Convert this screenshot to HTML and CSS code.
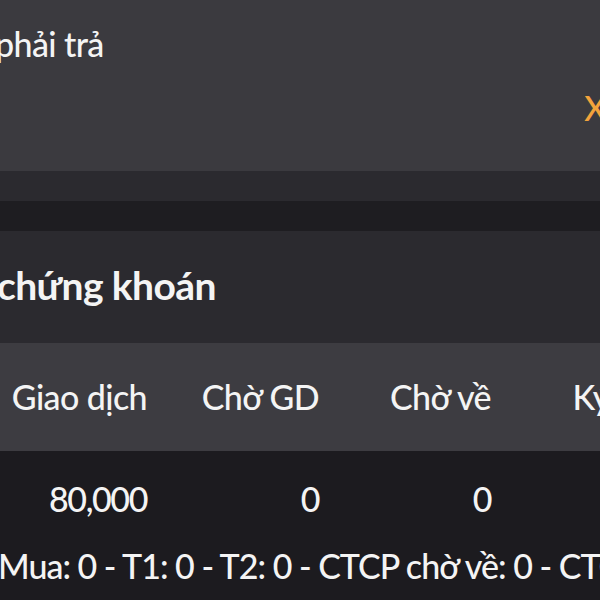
FILE: index.html
```html
<!DOCTYPE html>
<html lang="vi">

<head>
    <meta charset="UTF-8">
    <meta name="viewport" content="width=device-width, initial-scale=1.0">
    <title>Tài sản</title>
    <link rel="stylesheet" href="styles.css">
</head>

<body>
    <main class="page">

        <!-- summary card -->
        <section class="summary">
            <div class="summary-label">phải trả</div>
            <div class="summary-action">
                <a class="link">X</a>
            </div>
        </section>

        <div class="band"></div>
        <div class="band dark"></div>

        <!-- portfolio -->
        <section class="portfolio">
            <h2 class="title">chứng khoán</h2>
        </section>

        <div class="grid head">
            <div class="cell">Giao dịch</div>
            <div class="cell">Chờ GD</div>
            <div class="cell">Chờ về</div>
            <div class="cell">Ký gửi</div>
        </div>

        <div class="rows">
            <div class="grid values">
                <div class="cell">80,000</div>
                <div class="cell">0</div>
                <div class="cell">0</div>
                <div class="cell">0</div>
            </div>
            <p class="note">Mua: 0 - T1: 0 - T2: 0 - CTCP chờ về: 0 - CTCP chờ GD: 0</p>
        </div>

    </main>
</body>

</html>
```

FILE: styles.css
```css
* {
    margin: 0;
    padding: 0;
    box-sizing: border-box;
}

html,
body {
    height: 100%;
    overflow: hidden;
}

body {
    background-color: #1c1b1f;
    color: #f4f4f4;
    font-family: Lato, "Noto Sans", sans-serif;
    font-size: 34px;
    font-weight: 500;
    line-height: 40px;
    letter-spacing: -0.6px;
}

.page {
    display: flex;
    flex-direction: column;
    width: 600px;
}

/* summary card */

.summary {
    display: flex;
    flex-direction: column;
    height: 171px;
    padding-top: 24px;
    background-color: #3b3a3f;
}

.summary-label {
    margin-left: -5px;
    white-space: nowrap;
}

.summary-action {
    display: flex;
    justify-content: flex-end;
    margin-top: 24px;
    margin-right: -6px;
}

.summary-action .link {
    color: #f3a33c;
    cursor: pointer;
}

.band {
    height: 30px;
    background-color: #2b2a2f;
}

.band.dark {
    background-color: #1e1d21;
}

/* portfolio */

.portfolio {
    height: 112px;
    padding-top: 34px;
    background-color: #2b2a2f;
}

.portfolio .title {
    margin-left: -3px;
    font-size: 39px;
    font-weight: 700;
    white-space: nowrap;
}

.grid {
    display: grid;
    grid-template-columns: 160px 172px 172px 172px;
    white-space: nowrap;
}

.grid .cell {
    padding-right: 13px;
    text-align: right;
}

.grid.head {
    align-items: center;
    height: 108px;
    background-color: #3d3c41;
}

.grid.values .cell {
    letter-spacing: -1.4px;
}

.rows {
    padding-top: 28px;
}

.note {
    margin-top: 27px;
    margin-left: -2px;
    letter-spacing: -1px;
    white-space: nowrap;
}
```
